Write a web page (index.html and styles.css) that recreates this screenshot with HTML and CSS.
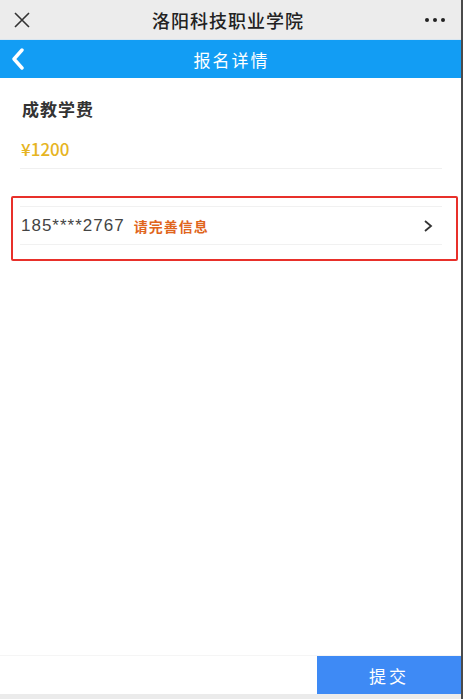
FILE: index.html
```html
<!DOCTYPE html>
<html lang="zh-CN">
<head>
  <meta charset="UTF-8" />
  <meta name="viewport" content="width=device-width, initial-scale=1.0"/>
  <title>报名详情</title>
  <link rel="stylesheet" href="styles.css">
</head>
<body>
  <div class="pagina">
    <header class="topo">
      <svg class="fechar" width="18" height="18" viewBox="0 0 18 18">
        <path d="M2 2 L16 16 M16 2 L2 16" stroke="#333" stroke-width="1.6" fill="none"/>
      </svg>
      <div class="titulo-app">洛阳科技职业学院</div>
      <div class="mais"><span></span><span></span><span></span></div>
    </header>

    <nav class="barra">
      <svg class="voltar" width="16" height="22" viewBox="0 0 16 22">
        <path d="M12 2 L4 11 L12 20" stroke="#fff" stroke-width="3.4" fill="none" stroke-linejoin="round" stroke-linecap="round"/>
      </svg>
      <div class="titulo-barra">报名详情</div>
    </nav>

    <main class="conteudo">
      <div class="taxa">
        <div class="taxa-nome">成教学费</div>
        <div class="taxa-valor">¥1200</div>
      </div>

      <div class="destaque">
        <div class="linha-info">
          <span class="telefone">185****2767</span>
          <span class="aviso">请完善信息</span>
          <svg class="seta" width="10" height="14" viewBox="0 0 10 14">
            <path d="M2 2 L8 7 L2 12" stroke="#333" stroke-width="1.8" fill="none"/>
          </svg>
        </div>
      </div>
    </main>

    <footer class="rodape">
      <div class="espaco"></div>
      <button class="enviar">提交</button>
    </footer>
    <div class="fundo"></div>
  </div>
</body>
</html>
```

FILE: styles.css
```css
body {
  margin: 0;
  padding: 0;
  font-family: "Noto Sans CJK SC", "Noto Sans", sans-serif;
  background-color: #fff;
}

.pagina {
  width: 461px;
  height: 699px;
  display: flex;
  flex-direction: column;
  border-right: 2px solid #4a4a4a;
}

.topo {
  height: 39px;
  background-color: #ececec;
  display: flex;
  align-items: center;
  justify-content: space-between;
  padding: 0 16px 0 13px;
  border-bottom: 1px solid #d9e6f0;
}

.titulo-app {
  font-size: 18px;
  font-weight: 500;
  color: #222;
  letter-spacing: 1px;
}

.mais {
  display: flex;
  gap: 4px;
}

.mais span {
  width: 4px;
  height: 4px;
  border-radius: 50%;
  background-color: #222;
}

.barra {
  height: 38px;
  background-color: #129df4;
  display: flex;
  align-items: center;
  padding: 0 10px;
}

.titulo-barra {
  flex: 1;
  text-align: center;
  color: #fff;
  font-size: 17px;
  letter-spacing: 2px;
  margin-right: 14px;
}

.conteudo {
  flex: 1;
}

.taxa {
  margin: 0 19px 0 20px;
  padding-top: 20px;
  border-bottom: 1px solid #f0f0f0;
}

.taxa-nome {
  font-size: 17px;
  font-weight: bold;
  color: #333;
  letter-spacing: 1px;
  padding-left: 2px;
  height: 22px;
  line-height: 22px;
}

.taxa-valor {
  font-size: 17px;
  font-weight: 500;
  color: #e6b422;
  height: 22px;
  line-height: 22px;
  margin-top: 18px;
  padding-bottom: 8px;
  padding-left: 1px;
}

.destaque {
  margin: 27px 3px 0 11px;
  border: 2px solid #e8302a;
  border-radius: 2px;
  padding: 8px 14px 14px 7px;
}

.linha-info {
  display: flex;
  align-items: center;
  height: 37px;
  border-top: 1px solid #f1f1f1;
  border-bottom: 1px solid #f1f1f1;
}

.telefone {
  font-family: "Liberation Sans", sans-serif;
  font-size: 17px;
  letter-spacing: 1px;
  color: #444;
  margin-left: 1px;
}

.aviso {
  font-size: 14px;
  font-weight: bold;
  letter-spacing: 1px;
  color: #e0651c;
  margin-left: 9px;
  flex: 1;
}

.seta {
  margin-right: 9px;
}

.rodape {
  height: 38px;
  display: flex;
  border-top: 1px solid #f5f5f5;
}

.espaco {
  flex: 1;
}

.enviar {
  width: 144px;
  border: none;
  background-color: #3e8af5;
  color: #fff;
  font-family: "Noto Sans CJK SC", sans-serif;
  font-size: 17px;
  letter-spacing: 3px;
  padding: 0;
}

.fundo {
  height: 5px;
  background-color: #ebebeb;
}
```
